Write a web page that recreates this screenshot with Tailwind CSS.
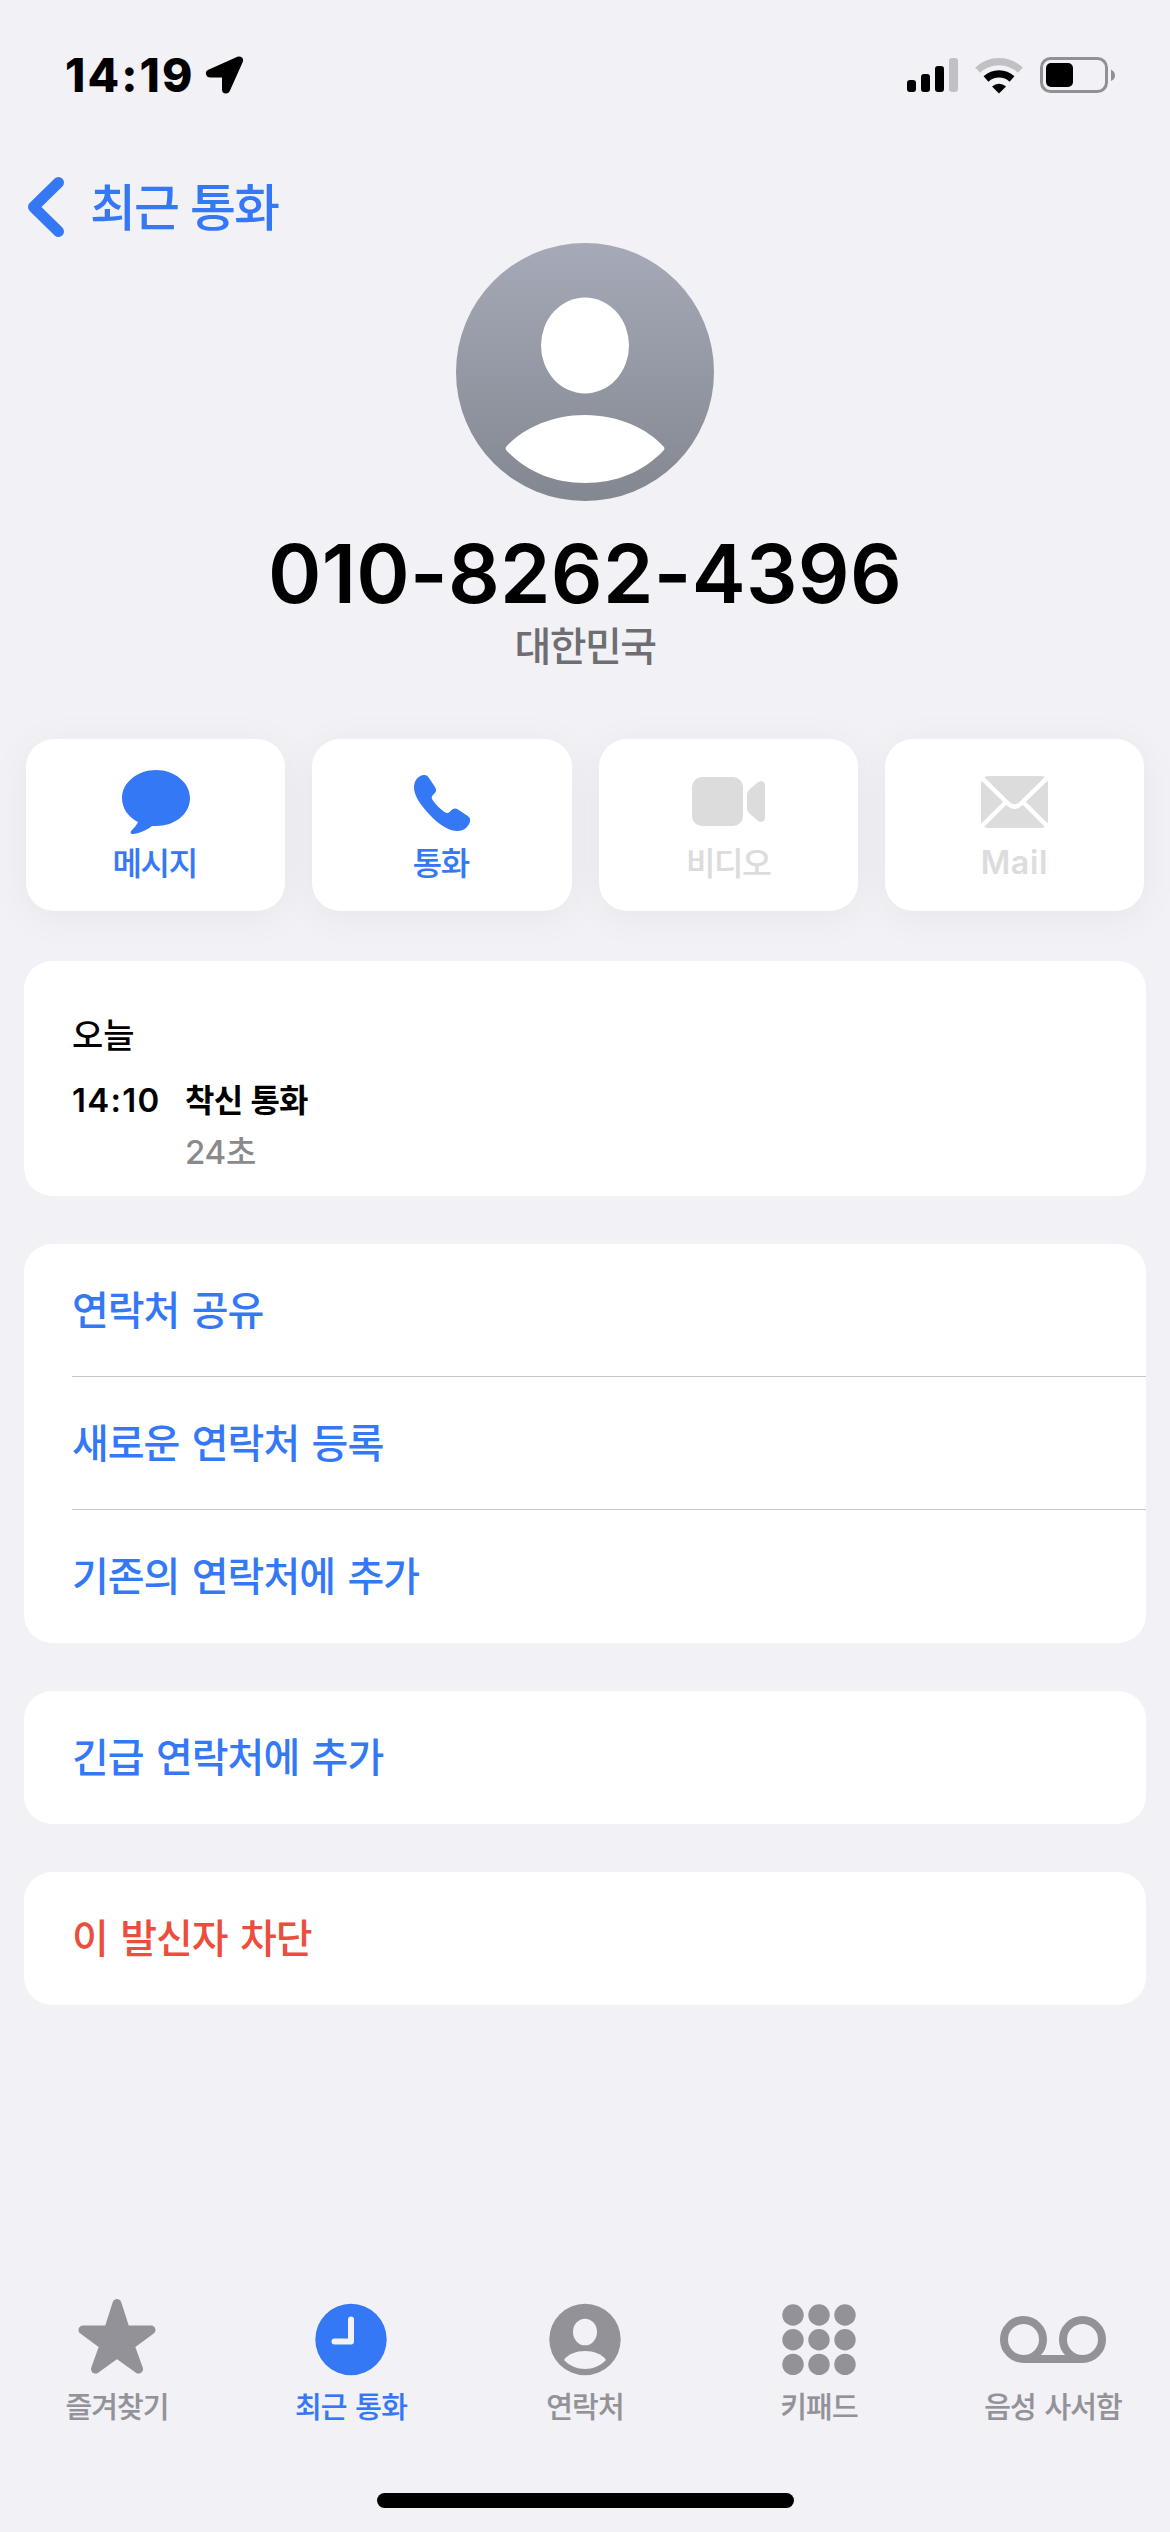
<!DOCTYPE html>
<html lang="ko">
<head>
<meta charset="utf-8">
<title>최근 통화</title>
<script src="https://cdn.jsdelivr.net/npm/@tailwindcss/browser@4"></script>
</head>
<body class="flex h-[2532px] w-[1170px] flex-col overflow-hidden bg-[#f1f1f6] font-['Noto_Sans_CJK_KR',sans-serif] font-medium text-black">

<!-- Status bar -->
<header class="flex h-[147px] items-start justify-between pt-[50px] pr-[55px] pl-[65px]">
  <div class="flex items-center gap-[11px]">
    <span class="font-['Inter',sans-serif] text-[46px] leading-[50px] font-extrabold tracking-[2.100px]">14:19</span>
    <svg width="39" height="38" viewBox="0 0 38 38"><path d="M33.500 4.500 L4.500 17.500 L20.500 17.500 L20.500 33.500 Z" fill="#000" stroke="#000" stroke-width="8" stroke-linejoin="round"/></svg>
  </div>
  <div class="flex h-[50px] items-center gap-[17px]">
    <svg width="51" height="36" viewBox="0 0 51 36"><rect x="0" y="23" width="9" height="12" rx="3"/><rect x="14" y="17" width="9" height="18" rx="3"/><rect x="28" y="9" width="9" height="26" rx="3"/><rect x="42" y="1" width="9" height="34" rx="3" fill="#c0c0c5"/></svg>
    <svg width="48" height="37" viewBox="0 0 48 37" fill="none"><path d="M2.600 13.200 A31 31 0 0 1 45.400 13.200" stroke="#c0c0c5" stroke-width="7.200"/><path d="M11 22 A19.200 19.200 0 0 1 37 22" stroke="#000" stroke-width="7.200"/><path d="M24 36.500 L17 29.500 A10.500 10.500 0 0 1 31 29.500 Z" fill="#000"/></svg>
    <svg width="75" height="36" viewBox="0 0 75 36"><rect x="1.500" y="1.500" width="65" height="33" rx="9" fill="none" stroke="#919195" stroke-width="3"/><rect x="6" y="6" width="27" height="24" rx="5"/><path d="M71 12.500 Q75 14.500 75 18.500 Q75 22 71 24 Z" fill="#919195"/></svg>
  </div>
</header>

<!-- Back navigation -->
<nav class="flex h-[96px] items-start pt-[30px] pl-[28px] text-[#3478f6]">
  <svg width="36" height="60" viewBox="0 0 36 60"><path d="M30.500 5.500 L5.500 30 L30.500 54.500" fill="none" stroke="currentColor" stroke-width="11" stroke-linecap="round" stroke-linejoin="round"/></svg>
  <span class="ml-[26px] text-[50px] leading-[54px] tracking-[-2px]">최근 통화</span>
</nav>

<main class="flex flex-1 flex-col">
  <section class="flex flex-col items-center">
    <svg width="258" height="258" viewBox="0 0 258 258">
      <defs><linearGradient id="av" x1="0" y1="0" x2="0" y2="1"><stop offset="0" stop-color="#a6aab8"/><stop offset="1" stop-color="#838790"/></linearGradient></defs>
      <circle cx="129" cy="129" r="129" fill="url(#av)"/>
      <ellipse cx="129" cy="102.500" rx="44" ry="48" fill="#fff"/>
      <path d="M50 204 C66 186 95 172 129 172 C163 172 192 186 208 204 Q209 206 207.500 207.500 C187 229 160 240 129 240 C98 240 71 229 50.500 207.500 Q49 206 50 204 Z" fill="#fff"/>
    </svg>
    <h1 class="mt-[31px] font-['Inter',sans-serif] text-[81px] leading-[84px] font-semibold tracking-[0.300px] whitespace-nowrap">010-8262-4396</h1>
    <p class="mt-[5px] mb-[5px] text-[40px] leading-[46px] tracking-[-1.500px] text-[#6e6e72]">대한민국</p>
  </section>

  <!-- Quick actions -->
  <section class="mt-[67px] grid grid-cols-4 gap-[27px] px-[26px] text-[32px] leading-[40px] tracking-[-1.400px]">
    <div class="flex h-[172px] flex-col items-center rounded-[28px] bg-white pt-[26px] text-[#3478f6] shadow-[0_6px_40px_rgba(0,0,0,0.05)]">
      <svg width="70" height="74" viewBox="0 0 70 74"><path d="M35 5 C54 5 69 18 69 33 C69 49 54 61 35 61 L31 61 C26 65 17 69 12 69 C9 69 9 67 11 65 C14 62 16 59 17 57 C7 52 1 43 1 33 C1 18 16 5 35 5 Z" fill="currentColor"/></svg>
      <span class="mt-[2px] pr-[2px] [-webkit-text-stroke:0.200px_currentColor]">메시지</span>
    </div>
    <div class="flex h-[172px] flex-col items-center rounded-[28px] bg-white pt-[26px] text-[#3478f6] shadow-[0_6px_40px_rgba(0,0,0,0.05)]">
      <svg width="58" height="74" viewBox="0 0 58 74"><path d="M10.500 10 C13 9.500 14.500 10.500 16 13 L22 22 C24 25.500 23 27 20.500 29.500 C18 32 18.500 33 20 35.500 C23 40 27 44 31.500 47 C34 48.500 35 48.500 37 46.500 C40 43.500 42 42.500 45 44.500 L54 50.500 C57 52.500 58 54.500 56.500 58 C54.500 63 50 66 44.500 66 C36 66 26 60 15 48 C6 38 1 29.500 1 22.500 C1 16 4.500 11 10.500 10 Z" fill="currentColor"/></svg>
      <span class="mt-[2px] pr-[2px] [-webkit-text-stroke:0.200px_currentColor]">통화</span>
    </div>
    <div class="flex h-[172px] flex-col items-center rounded-[28px] bg-white pt-[26px] text-[#dcdcdc] shadow-[0_6px_40px_rgba(0,0,0,0.05)]">
      <svg width="74" height="74" viewBox="0 0 74 74" fill="currentColor"><rect x="1" y="12" width="51" height="49" rx="10"/><path d="M56 29.500 Q56 27 58 25 L66 18 Q70 15 73 17.500 Q74 18.500 74 21 V52 Q74 54.500 73 55.500 Q70 58.500 66 55 L58 48 Q56 46 56 43.500 Z"/></svg>
      <span class="mt-[2px] [-webkit-text-stroke:0.200px_currentColor]">비디오</span>
    </div>
    <div class="flex h-[172px] flex-col items-center rounded-[28px] bg-white pt-[26px] text-[#dcdcdc] shadow-[0_6px_40px_rgba(0,0,0,0.05)]">
      <svg width="67" height="74" viewBox="0 0 67 74"><rect x="0" y="11" width="67" height="52" rx="7" fill="currentColor"/><path d="M-1 11 L27 38.500 Q33.500 45 40 38.500 L68 11 M-1 63 L25 37 M68 63 L42 37" fill="none" stroke="#fff" stroke-width="4.500"/></svg>
      <span class="mt-[4px] font-['Inter',sans-serif] text-[32px] font-semibold tracking-[0.700px]">Mail</span>
    </div>
  </section>

  <!-- Call history -->
  <section class="mx-[24px] mt-[50px] flex h-[235px] flex-col rounded-[28px] bg-white px-[48px] pt-[49px] text-[34px] leading-[48px]">
    <h2>오늘</h2>
    <div class="mt-[16px] flex text-[32px]">
      <span class="mt-[2px] w-[113px] font-['Inter',sans-serif] text-[33px] font-semibold tracking-[1.300px]">14:10</span>
      <span class="font-bold tracking-[-0.800px]">착신 통화</span>
    </div>
    <p class="mt-[4px] pl-[113px] font-['Inter','Noto_Sans_CJK_KR',sans-serif] text-[33px] tracking-[-0.200px] text-[#8a8a8d]">24초</p>
  </section>

  <!-- Contact actions -->
  <section class="mx-[24px] mt-[48px] flex flex-col rounded-[28px] bg-white pl-[48px] text-[40px] leading-[128px] tracking-[-1px] text-[#3478f6] [word-spacing:2.200px]">
    <a class="h-[133px] border-b border-[#c6c6c8]">연락처 공유</a>
    <a class="h-[133px] border-b border-[#c6c6c8]">새로운 연락처 등록</a>
    <a class="h-[133px]">기존의 연락처에 추가</a>
  </section>
  <section class="mx-[24px] mt-[48px] h-[133px] rounded-[28px] bg-white pl-[48px] text-[40px] leading-[128px] tracking-[-1px] text-[#3478f6] [word-spacing:2.200px]">긴급 연락처에 추가</section>
  <section class="mx-[24px] mt-[48px] h-[133px] rounded-[28px] bg-white pl-[48px] text-[40px] leading-[128px] tracking-[-1px] text-[#eb4e3d] [word-spacing:2.200px]">이 발신자 차단</section>
</main>

<!-- Tab bar -->
<footer class="flex h-[240px] flex-col items-center justify-between pb-[24px]">
  <div class="grid w-[1170px] grid-cols-5 text-center text-[29px] leading-[42px] tracking-[-0.900px] text-[#929298] [-webkit-text-stroke:0.200px_currentColor] [word-spacing:1.500px]">
    <div class="flex flex-col items-center">
      <svg width="80" height="92" viewBox="0 0 80 92"><path d="M40 11.500 L48.500 38 L74 38 L53 53.500 L61.500 77 L40 61.500 L18.500 77 L27 53.500 L6 38 L31.500 38 Z" fill="currentColor" stroke="currentColor" stroke-width="9" stroke-linejoin="round"/></svg>
      <span>즐겨찾기</span>
    </div>
    <div class="flex flex-col items-center text-[#3478f6]">
      <svg width="80" height="92" viewBox="0 0 80 92"><circle cx="40" cy="47.500" r="35.700" fill="currentColor"/><path d="M40 27.500 V49.500 H23.500" fill="none" stroke="#f1f1f6" stroke-width="6" stroke-linecap="round" stroke-linejoin="round"/></svg>
      <span>최근 통화</span>
    </div>
    <div class="flex flex-col items-center">
      <svg width="80" height="92" viewBox="0 0 80 92"><circle cx="40" cy="47.500" r="35.700" fill="currentColor"/><g fill="#f1f1f6"><ellipse cx="40" cy="40" rx="12" ry="13.300"/><path d="M19.500 67 C24 62 31 59 40 59 C49 59 56 62 60.500 67 Q61 68 60.500 68.500 C55 74 48 77 40 77 C32 77 25 74 19.500 68.500 Q19 68 19.500 67 Z"/></g></svg>
      <span>연락처</span>
    </div>
    <div class="flex flex-col items-center">
      <svg width="80" height="92" viewBox="0 0 80 92" fill="currentColor"><circle cx="14" cy="23" r="10.700"/><circle cx="40" cy="23" r="10.700"/><circle cx="66" cy="23" r="10.700"/><circle cx="14" cy="47.700" r="10.700"/><circle cx="40" cy="47.700" r="10.700"/><circle cx="66" cy="47.700" r="10.700"/><circle cx="14" cy="72.400" r="10.700"/><circle cx="40" cy="72.400" r="10.700"/><circle cx="66" cy="72.400" r="10.700"/></svg>
      <span>키패드</span>
    </div>
    <div class="flex flex-col items-center">
      <svg width="106" height="92" viewBox="0 0 106 92" fill="none" stroke="currentColor" stroke-width="8"><circle cx="23.500" cy="47.500" r="19.500"/><circle cx="82.500" cy="47.500" r="19.500"/><path d="M23.500 67 H82.500"/></svg>
      <span>음성 사서함</span>
    </div>
  </div>
  <div class="h-[15px] w-[417px] rounded-full bg-black"></div>
</footer>
</body>
</html>
